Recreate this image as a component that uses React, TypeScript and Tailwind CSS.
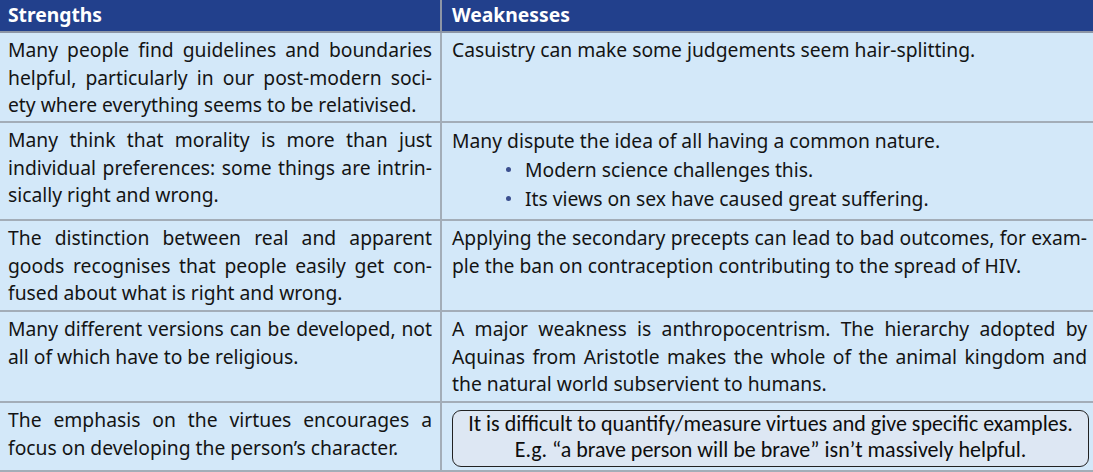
const font = { fontFamily: '"Noto Sans", sans-serif' }

function J({ lines }: { lines: string[] }) {
  return (
    <div>
      {lines.map((l, i) => (
        <div
          key={i}
          className={
            "whitespace-nowrap " +
            (i < lines.length - 1 ? "text-justify [text-align-last:justify]" : "")
          }
        >
          {l}
        </div>
      ))}
    </div>
  )
}

function Cell({ children, right }: { children: React.ReactNode; right?: boolean }) {
  return (
    <div
      className={
        "bg-[#d3e8f9] pt-[3px] border-b-2 border-[#a3adb8] " +
        (right ? "pl-[10px] pr-[6px]" : "pl-2 pr-2 border-r-2")
      }
    >
      {children}
    </div>
  )
}

export default function App() {
  return (
    <div
      className="w-[1093px] h-[472px] overflow-hidden bg-white text-[19.3px] leading-[27.5px] text-[#141414]"
      style={font}
    >
      <div className="grid grid-cols-[442px_1fr] grid-rows-[33px_90px_98px_91px_91px_69px]">
        <div className="bg-[#22408c] text-white font-bold px-2 pt-[1px] border-r-2 border-b-2 border-[#8d96a6]">
          Strengths
        </div>
        <div className="bg-[#22408c] text-white font-bold pl-[10px] pt-[1px] border-b-2 border-[#8d96a6]">
          Weaknesses
        </div>

        <Cell>
          <J
            lines={[
              "Many people find guidelines and boundaries",
              "helpful, particularly in our post-modern soci-",
              "ety where everything seems to be relativised.",
            ]}
          />
        </Cell>
        <Cell right>Casuistry can make some judgements seem hair-splitting.</Cell>

        <Cell>
          <J
            lines={[
              "Many think that morality is more than just",
              "individual preferences: some things are intrin-",
              "sically right and wrong.",
            ]}
          />
        </Cell>
        <Cell right>
          <div className="leading-[29px]">Many dispute the idea of all having a common nature.</div>
          <ul className="pl-[54px] leading-[29px]">
            <li className="flex items-center gap-[14px]">
              <span className="w-[5px] h-[5px] rounded-full bg-[#3b4f8f]" />
              Modern science challenges this.
            </li>
            <li className="flex items-center gap-[14px]">
              <span className="w-[5px] h-[5px] rounded-full bg-[#3b4f8f]" />
              Its views on sex have caused great suffering.
            </li>
          </ul>
        </Cell>

        <Cell>
          <J
            lines={[
              "The distinction between real and apparent",
              "goods recognises that people easily get con-",
              "fused about what is right and wrong.",
            ]}
          />
        </Cell>
        <Cell right>
          <J
            lines={[
              "Applying the secondary precepts can lead to bad outcomes, for exam-",
              "ple the ban on contraception contributing to the spread of HIV.",
            ]}
          />
        </Cell>

        <Cell>
          <J
            lines={[
              "Many different versions can be developed, not",
              "all of which have to be religious.",
            ]}
          />
        </Cell>
        <Cell right>
          <J
            lines={[
              "A major weakness is anthropocentrism. The hierarchy adopted by",
              "Aquinas from Aristotle makes the whole of the animal kingdom and",
              "the natural world subservient to humans.",
            ]}
          />
        </Cell>

        <Cell>
          <J
            lines={[
              "The emphasis on the virtues encourages a",
              "focus on developing the person\u2019s character.",
            ]}
          />
        </Cell>
        <div className="bg-[#d3e8f9] pl-[10px] pr-[4px] pt-[7px] border-b-2 border-[#a3adb8]">
          <div
            className="h-[57px] rounded-[9px] border border-[#222] bg-[#dde7f3] text-center text-[22px] leading-[26px] text-[#0d0d0d]"
            style={{ fontFamily: 'Carlito, Lato, sans-serif' }}
          >
            <div className="whitespace-nowrap">It is difficult to quantify/measure virtues and give specific examples.</div>
            <div className="whitespace-nowrap">E.g. &ldquo;a brave person will be brave&rdquo; isn&rsquo;t massively helpful.</div>
          </div>
        </div>
      </div>
    </div>
  )
}
